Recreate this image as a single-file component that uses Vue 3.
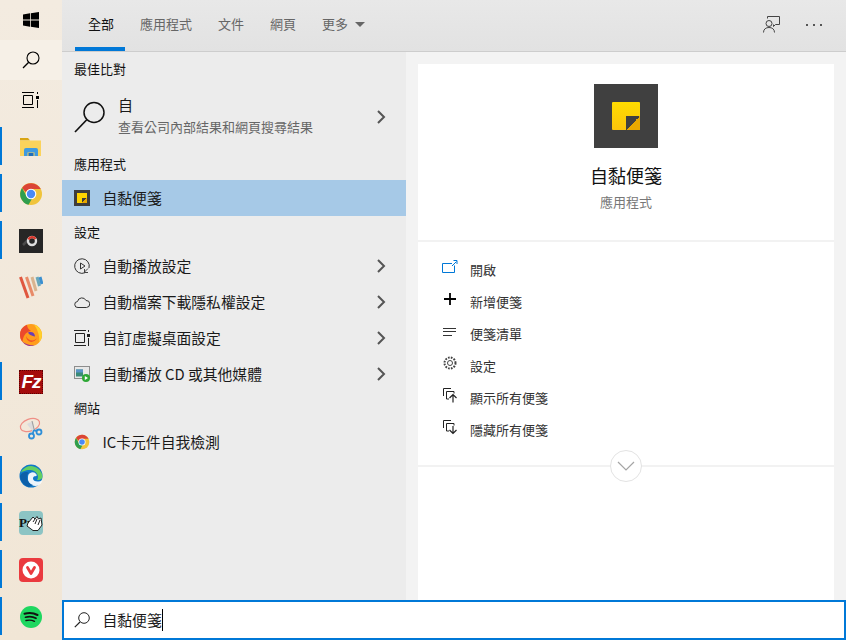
<script setup>
const tabs = [
  { label: '全部', active: true },
  { label: '應用程式' },
  { label: '文件' },
  { label: '網頁' },
]
const actions = [
  { id: 'open', label: '開啟' },
  { id: 'add', label: '新增便箋' },
  { id: 'list', label: '便箋清單' },
  { id: 'gear', label: '設定' },
  { id: 'show', label: '顯示所有便箋' },
  { id: 'hide', label: '隱藏所有便箋' },
]
</script>

<template>
  <div class="screen">
    <aside class="taskbar">
      <div class="slot slot-short">
        <svg width="16" height="16" viewBox="0 0 16 16"><path fill="#000" d="M0 2.400 7 1.300V7.600H0ZM7.800 1.200 16 0V7.600H7.800ZM0 8.400H7V14.700L0 13.600ZM7.800 8.400H16V16L7.800 14.800Z"/></svg>
      </div>
      <div class="slot slot-short slot-hover">
        <svg width="18" height="18" viewBox="0 0 18 18" fill="none" stroke="#000" stroke-width="1.100"><circle cx="11" cy="7" r="6"/><path d="M6.700 11.300 1 17" stroke-width="1.300"/></svg>
      </div>
      <div class="slot slot-short slot-tasks">
        <svg width="18" height="16" viewBox="0 0 18 16" fill="none" stroke="#000"><path d="M0 .5H12M0 15.500H12M1.500 3.500H10.500V12.500H1.500ZM15.500 0V2M15.500 8V16"/><rect x="14" y="4" width="3" height="3" fill="#000" stroke="none"/></svg>
      </div>

      <div class="slot active">
        <svg width="24" height="24" viewBox="0 0 24 24"><path fill="#d9a514" d="M1 3H9L11 5.500H1Z"/><path fill="#fbd35c" d="M1 5.500H22V21H1Z"/><path fill="#3f9ae0" d="M5 21V15A2 2 0 0 1 7 13H17A2 2 0 0 1 19 15V21H15.500V17.500H8.500V21Z"/><rect x="9.500" y="18" width="5" height="3" fill="#1d6fbe"/></svg>
      </div>
      <div class="slot active">
        <svg width="24" height="24" viewBox="0 0 24 24"><circle cx="12" cy="12" r="11" fill="#f0c43c"/><path fill="#db4437" d="M3 6A11 11 0 0 1 21.800 7H12A5 5 0 0 0 7.200 10.500Z"/><path fill="#2f9e4f" d="M3 6 8 14.800 12.800 17 9.500 22.800A11 11 0 0 1 3 6Z"/><circle cx="12" cy="12" r="5.300" fill="#fff"/><circle cx="12" cy="12" r="4.200" fill="#4a8af4"/></svg>
      </div>
      <div class="slot active">
        <svg width="24" height="24" viewBox="0 0 24 24"><rect width="24" height="24" fill="#262626"/><path d="M4 16 9 11" stroke="#4a4a4a" stroke-width="2.500"/><circle cx="13" cy="12" r="4" fill="none" stroke="#ddd" stroke-width="2.400"/><path d="M9.500 10.500A4 4 0 0 1 16.500 10" fill="none" stroke="#d9372c" stroke-width="2.400"/></svg>
      </div>
      <div class="slot">
        <svg width="24" height="24" viewBox="0 0 24 24" fill="none" stroke-width="3"><path stroke="#e0573f" d="M1.500 1 9 22"/><path stroke="#e88a68" d="M7.500 1 14 20"/><path stroke="#d9b48f" d="M13 1 17 15"/><path stroke="#6aa7b8" d="M18 1 20.500 10"/><path stroke="#3a8fd0" d="M21 1 23 8"/></svg>
      </div>
      <div class="slot">
        <svg width="24" height="24" viewBox="0 0 24 24"><circle cx="12" cy="12" r="11" fill="#ff9d1c"/><path fill="#ffd02c" d="M15 1.500A11 11 0 0 1 23 12 11 11 0 0 1 20 19.500C21 14 19 7 15 1.500Z"/><path fill="#ec4a2c" d="M8 1.800A11 11 0 0 0 1 12C1 15 2 17 3.500 19 4 14 6 9 12 8 9 6 8 4 8 1.800Z"/><path fill="#9a2f9c" d="M3 18.300A11 11 0 0 0 15.500 22.500C10 22.500 6 21 3 18.300Z"/><path fill="#6a3fb5" d="M9 9.500C13 8 16 10 16 13.500 13 12.500 10.500 12.500 9 9.500Z"/><path fill="#f2502c" d="M7 13C9 18 15 19 18 15 16 20 8 21 7 13Z"/></svg>
      </div>
      <div class="slot active">
        <div class="fz-logo"><span class="fz-text">Fz</span></div>
      </div>
      <div class="slot">
        <svg width="24" height="24" viewBox="0 0 24 24" fill="none"><ellipse cx="11" cy="8" rx="10" ry="6" stroke="#ef8f86" stroke-width="1.200" transform="rotate(-20 11 8)"/><path fill="#dcdcdc" d="M8 7 14 4 16 13 14 15Z"/><path stroke="#9c9c9c" d="M13 4 15.500 14"/><circle cx="12.500" cy="19" r="2.500" stroke="#2f8fd8" stroke-width="1.800"/><circle cx="20" cy="15" r="2.500" stroke="#2f8fd8" stroke-width="1.800"/><path stroke="#2f8fd8" stroke-width="1.800" d="M15 13 13.500 17M15 13 18 14.500"/></svg>
      </div>
      <div class="slot active">
        <svg width="24" height="24" viewBox="0 0 24 24"><circle cx="12" cy="12" r="11.500" fill="#0f78c8"/><path fill="#63cf63" d="M1.500 9A11.500 11.500 0 0 1 23.500 12.500C23.500 15 21 16.500 18 16 21 12 17 6 11 6 6 6 2.500 8 1.500 9Z"/><path fill="#fff" d="M23.500 16A7 7 0 0 1 9 13 4.600 4.600 0 0 1 17.500 10.500C19 13 14 11 14 14.500 14 18 20 18.500 23.500 16Z" opacity=".92"/><path fill="#0d5fa8" d="M10 23A11.500 11.500 0 0 1 1 12C3 7.500 8 7 9.800 9 6.500 11 7 19 14 21Z"/></svg>
      </div>
      <div class="slot active">
        <div class="pm-logo">
          <span class="pm-text">Pm</span>
          <svg class="pm-hand" width="17" height="18" viewBox="0 0 17 18"><path fill="#fff" stroke="#222" d="M2 9 7 3 9 5 11 2.500 12.500 5 15 4 16 11 12 16.500H7L1 12Z"/><path stroke="#222" fill="none" d="M7 8 9 5M9 10 11 5M12 11 14 6"/></svg>
        </div>
      </div>
      <div class="slot active">
        <svg width="24" height="24" viewBox="0 0 24 24"><rect width="24" height="24" rx="4" fill="#ea3a3f"/><circle cx="12" cy="12" r="8.500" fill="#fff"/><path fill="none" stroke="#ea3a3f" stroke-width="2.800" stroke-linecap="round" stroke-linejoin="round" d="M8.500 9.500 12 15.500 15.500 9.500"/></svg>
      </div>
      <div class="slot active">
        <svg width="24" height="24" viewBox="0 0 24 24"><circle cx="12" cy="12" r="11" fill="#1ed760"/><path fill="none" stroke="#111" stroke-linecap="round" d="M5.500 8.800C10 7.500 14.500 7.800 18.500 10" stroke-width="2"/><path fill="none" stroke="#111" stroke-linecap="round" d="M6.500 12.200C10 11.200 14 11.500 17 13.300" stroke-width="1.700"/><path fill="none" stroke="#111" stroke-linecap="round" d="M7 15.500C10 14.800 13 15 15.500 16.300" stroke-width="1.400"/></svg>
      </div>
    </aside>

    <div class="main">
      <header class="topbar">
        <nav class="tabs">
          <div v-for="tab in tabs" :key="tab.label" class="tab" :class="{ 'tab-active': tab.active }">{{ tab.label }}</div>
          <div class="tab">更多<span class="caret"></span></div>
        </nav>
        <div class="top-actions">
          <svg width="17" height="17" viewBox="0 0 17 17" fill="none" stroke="#444"><path d="M4.500 2.500V.5H16.500V8.500H12.500L10.500 10.500V8.500"/><circle cx="6" cy="7.500" r="3"/><path d="M.5 16.500C.5 13 3 11.500 6 11.500S11.500 13 11.500 16.500"/></svg>
          <div class="dots"><span></span><span></span><span></span></div>
        </div>
      </header>

      <div class="body">
        <section class="results">
          <h3 class="heading">最佳比對</h3>
          <div class="best">
            <svg width="33" height="33" viewBox="0 0 33 33" fill="none" stroke="#111"><circle cx="20" cy="12.500" r="10" stroke-width="1.500"/><path d="M13 19.500 1 32" stroke-width="1.700"/></svg>
            <div class="best-text">
              <div class="best-title">自</div>
              <div class="best-sub">查看公司內部結果和網頁搜尋結果</div>
            </div>
            <svg class="chevron" width="9" height="14" viewBox="0 0 9 14" fill="none" stroke="#555" stroke-width="2"><path d="M1 1 7 7 1 13"/></svg>
          </div>

          <h3 class="heading">應用程式</h3>
          <div class="row row-selected">
            <div class="note-small"><div class="note-small-in"><div class="note-small-fold"></div></div></div>
            <span>自黏便箋</span>
          </div>

          <h3 class="heading">設定</h3>
          <div class="row">
            <svg width="16" height="16" viewBox="0 0 16 16" fill="none" stroke="#333"><path d="M11 14.700A7.300 7.300 0 1 1 15 10"/><path d="M6.500 5 11 8 6.500 11Z"/><path d="M14 10.500 10.500 14M10.500 11V14.500H14" stroke-width=".9"/></svg>
            <span>自動播放設定</span>
            <svg class="chevron" width="9" height="14" viewBox="0 0 9 14" fill="none" stroke="#555" stroke-width="2"><path d="M1 1 7 7 1 13"/></svg>
          </div>
          <div class="row">
            <svg width="16" height="16" viewBox="0 0 16 16" fill="none" stroke="#333"><path d="M4 13.500A3 3 0 0 1 3.500 7.500 4.500 4.500 0 0 1 12 6.500 3.500 3.500 0 0 1 12.500 13.500Z"/></svg>
            <span>自動檔案下載隱私權設定</span>
            <svg class="chevron" width="9" height="14" viewBox="0 0 9 14" fill="none" stroke="#555" stroke-width="2"><path d="M1 1 7 7 1 13"/></svg>
          </div>
          <div class="row">
            <svg width="16" height="16" viewBox="0 0 16 16" fill="none" stroke="#222"><path d="M0 .5H12M0 15.500H12M1.500 3.500H10.500V12.500H1.500ZM14.500 0V2M14.500 8V16"/><rect x="13" y="4" width="3" height="3" fill="#222" stroke="none"/></svg>
            <span>自訂虛擬桌面設定</span>
            <svg class="chevron" width="9" height="14" viewBox="0 0 9 14" fill="none" stroke="#555" stroke-width="2"><path d="M1 1 7 7 1 13"/></svg>
          </div>
          <div class="row">
            <svg width="16" height="16" viewBox="0 0 16 16"><rect x=".5" y=".5" width="15" height="12" fill="#e8e8e8" stroke="#8d8d8d"/><rect x="2" y="3.500" width="7" height="7" fill="#3a8a78"/><rect x="2" y="3.500" width="7" height="3" fill="#5a93c8"/><circle cx="12" cy="12" r="4" fill="#2ea836"/><path fill="#fff" d="M10.800 10 14 12 10.800 14Z"/></svg>
            <span>自動播放 CD 或其他媒體</span>
            <svg class="chevron" width="9" height="14" viewBox="0 0 9 14" fill="none" stroke="#555" stroke-width="2"><path d="M1 1 7 7 1 13"/></svg>
          </div>

          <h3 class="heading">網站</h3>
          <div class="row">
            <svg width="16" height="16" viewBox="0 0 24 24"><circle cx="12" cy="12" r="11" fill="#f0c43c"/><path fill="#db4437" d="M3 6A11 11 0 0 1 21.800 7H12A5 5 0 0 0 7.200 10.500Z"/><path fill="#2f9e4f" d="M3 6 8 14.800 12.800 17 9.500 22.800A11 11 0 0 1 3 6Z"/><circle cx="12" cy="12" r="5.300" fill="#fff"/><circle cx="12" cy="12" r="4.200" fill="#4a8af4"/></svg>
            <span>IC卡元件自我檢測</span>
          </div>
        </section>

        <section class="detail">
          <div class="card">
            <div class="card-head">
              <div class="note-big"><div class="note-big-in"><div class="note-fold"></div></div></div>
              <div class="card-title">自黏便箋</div>
              <div class="card-sub">應用程式</div>
            </div>
            <div class="card-actions">
              <div v-for="item in actions" :key="item.id" class="action">
                <svg v-if="item.id === 'open'" width="16" height="16" viewBox="0 0 16 16" fill="none" stroke="#0078d7"><path d="M12.500 6.500V13.500H.5V4.500H10"/><path d="M10 7 14.500 2.500M11.500 1.500H15V5"/></svg>
                <svg v-else-if="item.id === 'add'" width="16" height="16" viewBox="0 0 16 16" stroke="#000" stroke-width="1.800"><path d="M8 2V14M2 8H14"/></svg>
                <svg v-else-if="item.id === 'list'" width="16" height="16" viewBox="0 0 16 16" stroke="#333"><path d="M1 5.500H14M1 8.500H14M1 12.500H10"/></svg>
                <svg v-else-if="item.id === 'gear'" width="16" height="16" viewBox="0 0 16 16" fill="none" stroke="#444"><circle cx="8" cy="8" r="2.500"/><circle cx="8" cy="8" r="5.500" stroke-width="2" stroke-dasharray="1.700 1.200"/></svg>
                <svg v-else-if="item.id === 'show'" width="16" height="16" viewBox="0 0 16 16" fill="none" stroke="#222"><path d="M1.500 9V1.500H9M4.500 12V4.500H12V6.500M4.500 12H7"/><path d="M11 15.500V8M7.500 11 11 7.500 14.500 11" stroke-width="1.200"/></svg>
                <svg v-else width="16" height="16" viewBox="0 0 16 16" fill="none" stroke="#222"><path d="M1.500 9V1.500H9M4.500 12V4.500H12V6.500M4.500 12H7"/><path d="M11 7V14.500M7.500 11 11 14.500 14.500 11" stroke-width="1.200"/></svg>
                <span>{{ item.label }}</span>
              </div>
            </div>
            <div class="expander">
              <div class="expand-btn">
                <svg width="18" height="10" viewBox="0 0 18 10" fill="none" stroke="#a5a5a5" stroke-width="1.200"><path d="M1 1 9 9 17 1"/></svg>
              </div>
            </div>
          </div>
        </section>
      </div>

      <footer class="searchbox">
        <svg width="16" height="16" viewBox="0 0 16 16" fill="none" stroke="#222"><circle cx="10" cy="6" r="5.300"/><path d="M6 10 .8 15.200" stroke-width="1.200"/></svg>
        <span class="query">自黏便箋</span><span class="cursor"></span>
      </footer>
    </div>
  </div>
</template>

<style>
html, body {
  margin: 0;
  background: #fff;
}
</style>

<style scoped>
.screen {
  display: flex;
  width: 846px;
  height: 640px;
  overflow: hidden;
  font-family: "Noto Sans CJK TC", "Noto Sans", sans-serif;
  color: #1a1a1a;
}

.taskbar {
  width: 62px;
  flex: none;
  display: flex;
  flex-direction: column;
  background: linear-gradient(#f3ebe0, #f1e6d6);
}

.slot {
  position: relative;
  height: 47px;
  flex: none;
  display: flex;
  align-items: center;
  justify-content: center;
}

.slot-short {
  height: 40px;
}

.slot-tasks {
  margin-bottom: 3px;
}

.slot-hover {
  background: #f6f0e7;
}

.active::before {
  content: "";
  position: absolute;
  left: 0;
  top: 4px;
  width: 2px;
  height: 38px;
  background: #0078d7;
}

.fz-logo {
  width: 24px;
  height: 24px;
  background: #a50c0c;
  border: 1px dotted #5d0000;
  box-sizing: border-box;
  display: flex;
  align-items: center;
  justify-content: center;
}

.fz-text {
  font-family: "Liberation Sans", sans-serif;
  font-size: 19px;
  font-weight: 700;
  font-style: italic;
  line-height: 1;
  color: #fff;
  letter-spacing: -1px;
}

.pm-logo {
  position: relative;
  width: 24px;
  height: 24px;
  border-radius: 4px;
  background: #8cc4c4;
}

.pm-text {
  position: absolute;
  left: 0;
  top: 5px;
  font-family: "Liberation Serif", serif;
  font-size: 13px;
  font-weight: 700;
  line-height: 14px;
  color: #111;
}

.pm-hand {
  position: absolute;
  right: 0;
  top: 3px;
}

.main {
  flex: 1;
  display: flex;
  flex-direction: column;
  min-width: 0;
}

.topbar {
  height: 51px;
  flex: none;
  display: flex;
  justify-content: space-between;
  padding-left: 13px;
  background: linear-gradient(#e8e8e8, #e2e2e2);
  border-bottom: 1px solid #cdcdcd;
}

.tabs {
  display: flex;
}

.tab {
  position: relative;
  display: flex;
  align-items: center;
  gap: 7px;
  height: 47px;
  padding: 0 13px;
  font-size: 13px;
  color: #666;
}

.tab-active {
  color: #111;
}

.tab-active::after {
  content: "";
  position: absolute;
  left: 0;
  right: 2px;
  bottom: -4px;
  height: 4px;
  background: #0078d7;
}

.caret {
  width: 0;
  height: 0;
  border-left: 5px solid transparent;
  border-right: 5px solid transparent;
  border-top: 5px solid #666;
  margin-top: 1px;
}

.top-actions {
  display: flex;
  align-items: center;
  gap: 26px;
  padding-right: 24px;
  margin-top: -2px;
}

.dots {
  display: flex;
  gap: 5px;
}

.dots span {
  width: 2px;
  height: 2px;
  background: #555;
}

.body {
  flex: 1;
  display: flex;
  min-height: 0;
}

.results {
  width: 344px;
  flex: none;
  padding-top: 1px;
  box-sizing: border-box;
  background: #ececec;
}

.heading {
  height: 32px;
  margin: 0;
  padding-left: 12px;
  font-size: 13px;
  font-weight: 400;
  line-height: 31px;
  color: #111;
}

.best {
  height: 63px;
  display: flex;
  align-items: center;
  padding: 0 20px 0 12px;
  gap: 11px;
}

.best-text {
  display: flex;
  flex-direction: column;
  gap: 2px;
  margin-top: -3px;
}

.best-title {
  font-size: 15px;
  line-height: 21px;
}

.best-sub {
  font-size: 13px;
  line-height: 19px;
  color: #666;
}

.chevron {
  margin-left: auto;
  flex: none;
}

.row {
  height: 36px;
  display: flex;
  align-items: center;
  gap: 12.500px;
  padding: 0 20px 0 12px;
  font-size: 14.800px;
}

.row span {
  margin-top: -2px;
}

.row-selected {
  background: #a6c9e7;
}

.note-small {
  width: 16px;
  height: 16px;
  flex: none;
  display: flex;
  align-items: center;
  justify-content: center;
  background: #3d3d3d;
}

.note-small-in {
  position: relative;
  width: 10px;
  height: 10px;
  background: #ffd400;
}

.note-small-fold {
  position: absolute;
  right: 0;
  bottom: 0;
  width: 5px;
  height: 5px;
  background: linear-gradient(135deg, #3d3d3d 50%, #e8a800 50%);
}

.detail {
  flex: 1;
  padding: 12px 12px 0;
  background: #f3f3f3;
}

.card {
  height: 100%;
  background: #fff;
}

.card-head {
  height: 178px;
  padding-top: 20px;
  box-sizing: border-box;
  display: flex;
  flex-direction: column;
  align-items: center;
  border-bottom: 2px solid #f2f2f2;
}

.note-big {
  width: 64px;
  height: 64px;
  display: flex;
  align-items: center;
  justify-content: center;
  background: #404040;
}

.note-big-in {
  position: relative;
  width: 28px;
  height: 28px;
  border-radius: 1px;
  background: linear-gradient(#ffdc00, #fbc40c);
}

.note-fold {
  position: absolute;
  right: 0;
  bottom: 0;
  width: 14px;
  height: 14px;
  background: linear-gradient(135deg, #404040 50%, #e8a800 50%);
}

.card-title {
  margin-top: 15px;
  font-size: 18px;
  line-height: 24px;
  color: #111;
}

.card-sub {
  margin-top: 6px;
  font-size: 13px;
  line-height: 18px;
  color: #777;
}

.card-actions {
  padding-top: 11px;
}

.action {
  height: 32px;
  display: flex;
  align-items: center;
  gap: 12px;
  padding-left: 24px;
  font-size: 13px;
  color: #333;
}

.action svg {
  margin-top: -4px;
}

.expander {
  position: relative;
  margin-top: 20px;
  height: 2px;
  background: #f2f2f2;
}

.expand-btn {
  position: absolute;
  left: 192px;
  top: -15px;
  width: 32px;
  height: 32px;
  box-sizing: border-box;
  display: flex;
  align-items: center;
  justify-content: center;
  border: 1px solid #e3e3e3;
  border-radius: 50%;
  background: #fff;
}

.searchbox {
  height: 40px;
  flex: none;
  box-sizing: border-box;
  display: flex;
  align-items: center;
  padding-left: 10px;
  border: 2px solid #0078d7;
  background: #fff;
  font-size: 14.800px;
}

.query {
  margin-left: 12.500px;
  margin-top: -2px;
}

.cursor {
  width: 1px;
  height: 22px;
  background: #000;
}
</style>
